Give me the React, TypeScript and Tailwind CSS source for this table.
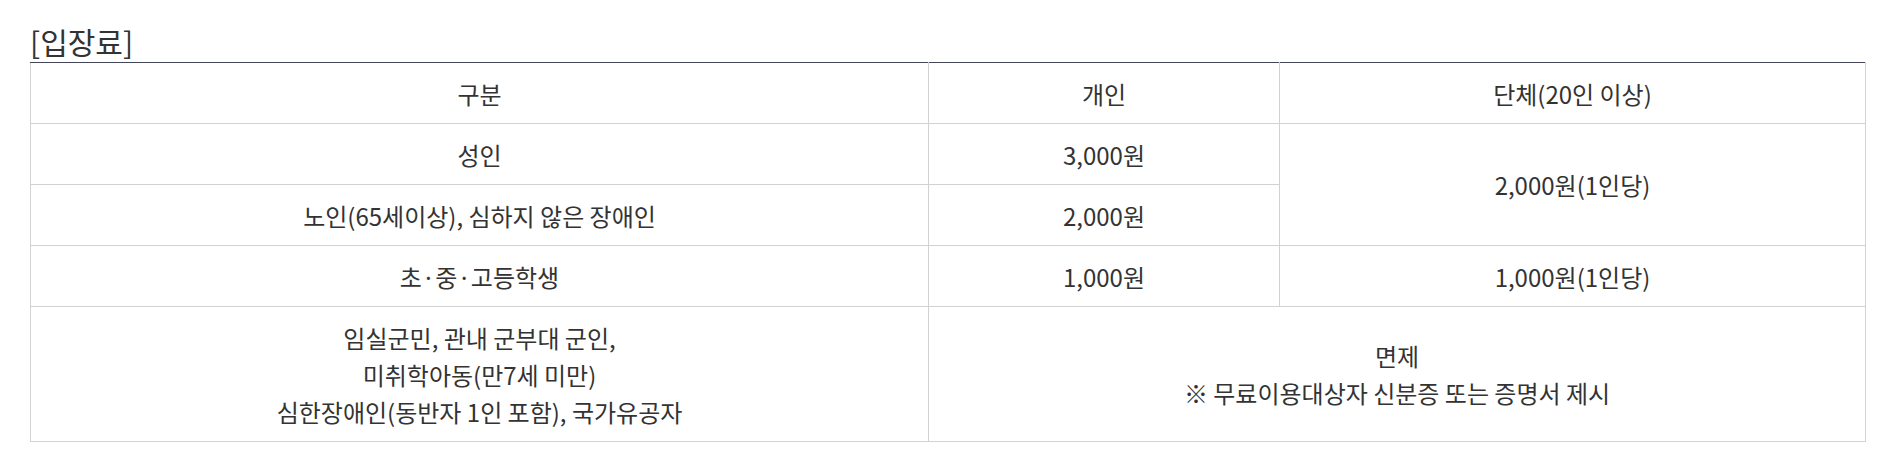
export default function App() {
  const cell = "border border-[#d2d2d2] px-4 py-[11.5px] text-center align-middle";
  return (
    <div
      className="min-h-screen bg-white pl-[30px] pr-[14px] pt-[22px] text-[#333]"
      style={{ fontFamily: '"Noto Sans CJK KR", "Noto Sans", sans-serif' }}
    >
      <h3 className="text-[30px] leading-[38px] font-normal text-[#333] mb-[2px]">[입장료]</h3>
      <table className="w-full border-collapse border-t border-t-[#434656] text-[24px] leading-[37px]">
        <colgroup>
          <col className="w-[898px]" />
          <col className="w-[351px]" />
          <col />
        </colgroup>
        <thead>
          <tr>
            <th className={`${cell} border-t-[#434656] font-normal`}>구분</th>
            <th className={`${cell} border-t-[#434656] font-normal`}>개인</th>
            <th className={`${cell} border-t-[#434656] font-normal`}>단체(20인 이상)</th>
          </tr>
        </thead>
        <tbody>
          <tr>
            <td className={cell}>성인</td>
            <td className={cell}>3,000원</td>
            <td className={cell} rowSpan={2}>2,000원(1인당)</td>
          </tr>
          <tr>
            <td className={cell}>노인(65세이상), 심하지 않은 장애인</td>
            <td className={cell}>2,000원</td>
          </tr>
          <tr>
            <td className={cell}>초·중·고등학생</td>
            <td className={cell}>1,000원</td>
            <td className={cell}>1,000원(1인당)</td>
          </tr>
          <tr>
            <td className={cell}>
              임실군민, 관내 군부대 군인,
              <br />
              미취학아동(만7세 미만)
              <br />
              심한장애인(동반자 1인 포함), 국가유공자
            </td>
            <td className={cell} colSpan={2}>
              면제
              <br />※ 무료이용대상자 신분증 또는 증명서 제시
            </td>
          </tr>
        </tbody>
      </table>
    </div>
  );
}
